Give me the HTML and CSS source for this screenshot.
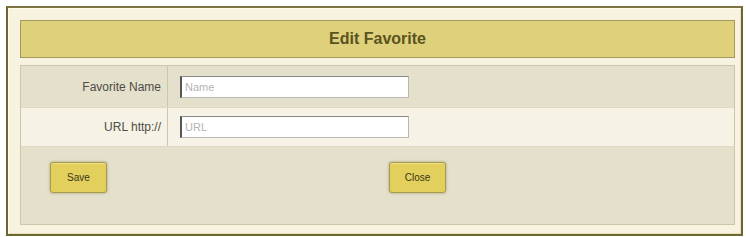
FILE: index.html
```html
<!DOCTYPE html>
<html lang="en">
<head>
  <meta charset="UTF-8">
  <title>Edit Favorite</title>
  <link rel="stylesheet" href="styles.css">
</head>
<body>
  <div class="panel">
    <div class="panel-head">Edit Favorite</div>
    <div class="form-box">
      <div class="form-row row-dark">
        <label class="form-label" for="fav-name">Favorite Name</label>
        <div class="form-field">
          <input type="text" id="fav-name" placeholder="Name">
        </div>
      </div>
      <div class="form-row row-light">
        <label class="form-label" for="fav-url">URL http://</label>
        <div class="form-field">
          <input type="text" id="fav-url" placeholder="URL">
        </div>
      </div>
      <div class="form-buttons">
        <button class="btn btn-save">Save</button>
        <button class="btn btn-close">Close</button>
      </div>
    </div>
  </div>
</body>
</html>
```

FILE: styles.css
```css
:root{
  --olive-dark: #6c6634;
  --cream: #f8f3e0;
  --gold: #dfd07c;
  --gold-border: #a69a5a;
  --row-dark: #e4e0cb;
  --row-light: #f6f3e6;
  --line: #cbc7ab;
}
*{
  box-sizing: border-box;
  font-family: "Liberation Sans", Arial, sans-serif;
}
body{
  margin: 0;
  padding: 6px 3px 1px 6px;
  background: #fff;
}
.panel{
  height: 230px;
  border: 2px solid var(--olive-dark);
  border-top-color: #7a7540;
  background: var(--cream);
  box-shadow: inset 1px 1px 0 #fffbe9, inset -1px -1px 0 #e9e2b8;
  padding: 12px 6px 0 12px;
}
.panel-head{
  height: 38px;
  background: var(--gold);
  border: 1px solid var(--gold-border);
  display: flex;
  justify-content: center;
  align-items: center;
  font-size: 16px;
  font-weight: bold;
  color: #5a5320;
}
.form-box{
  margin-top: 7px;
  border: 1px solid var(--line);
  background: var(--row-dark);
}
.form-row{
  display: flex;
  border-bottom: 1px solid #ddd9c2;
}
.row-dark{
  height: 42px;
  background: var(--row-dark);
}
.row-light{
  height: 39px;
  background: var(--row-light);
}
.form-label{
  width: 147px;
  border-right: 1px solid var(--line);
  text-align: right;
  padding: 0 6px 0 0;
  font-size: 12px;
  color: #4d4d45;
  display: flex;
  align-items: center;
  justify-content: flex-end;
}
.form-field{
  padding-left: 12px;
  display: flex;
  align-items: center;
}
input{
  width: 229px;
  height: 22px;
  border: 1px solid #b9b9b0;
  border-left: 2px solid #555;
  border-top-color: #888;
  background: #fff;
  padding: 0 3px;
  font-size: 11px;
  color: #333;
  outline: none;
}
input::placeholder{
  color: #b4b4b4;
}
.form-buttons{
  height: 77px;
  display: flex;
  align-items: flex-start;
  padding: 15px 0 0 29px;
  gap: 282px;
}
.btn{
  width: 57px;
  height: 31px;
  background: #e2cf5c;
  border: 1px solid #a89a4c;
  border-radius: 3px;
  box-shadow: 0 0 3px rgba(90, 80, 30, 0.45), inset 0 1px 0 #efe08a;
  font-size: 10px;
  color: #3b3515;
  cursor: pointer;
}
.btn:hover{
  background: #d6c24c;
}
```
